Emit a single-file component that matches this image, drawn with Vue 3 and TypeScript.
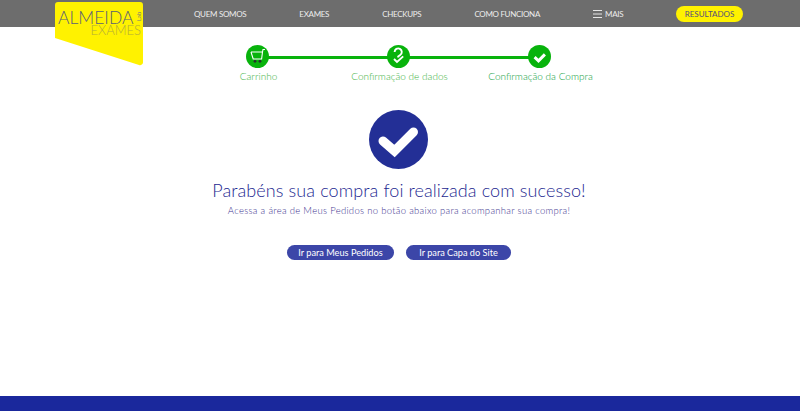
<template>
  <div class="page">
    <header class="topbar">
      <div class="logo">
        <svg viewBox="0 0 88 66" width="88" height="66">
          <path d="M3 2H85a3 3 0 0 1 3 3V62a3 3 0 0 1-4 3L0 38V5a3 3 0 0 1 3-3Z" fill="#fff200" />
        </svg>
        <span class="logo-name">ALMEIDA</span>
        <span class="logo-sub">EXAMES</span>
        <span class="logo-lab">Lab</span>
      </div>
      <nav class="nav">
        <a v-for="item in menu" :key="item" class="nav-link">{{ item }}</a>
        <a class="nav-link nav-more">
          <svg viewBox="0 0 9 8" width="9" height="8" fill="none" stroke="#e6e6e6" stroke-width="1">
            <path d="M0 .5H9M0 4H9M0 7.5H9" />
          </svg>
          MAIS
        </a>
      </nav>
      <button class="results">RESULTADOS</button>
    </header>

    <main class="content">
      <div class="steps">
        <div class="steps-line" />
        <div v-for="step in steps" :key="step.label" class="step" :class="{ current: step.current }">
          <span class="step-dot">
            <svg v-if="step.icon === 'cart'" viewBox="0 0 23 23" width="23" height="23" fill="none" stroke="#fff" stroke-width="1.1">
              <path d="M5 7H16.5L15.6 14H7.2L5 7M16.5 7L17 4.5H19" />
              <circle cx="9" cy="16.3" r="1.4" fill="#26302a" stroke="none" />
              <circle cx="14" cy="16.3" r="1.4" fill="#26302a" stroke="none" />
            </svg>
            <svg v-else-if="step.icon === 'question'" viewBox="0 0 23 23" width="23" height="23" fill="none" stroke="#fff" stroke-width="1.9">
              <path d="M7.6 7a3.6 3.6 0 1 1 5.6 3L11.2 11.4V12.6" />
              <path d="M7 14l3 3 6.2-5.6" />
            </svg>
            <svg v-else viewBox="0 0 23 23" width="23" height="23" fill="none" stroke="#fff" stroke-width="3">
              <path d="M6.6 12.2l3.9 3.6 6.4-6.4" />
            </svg>
          </span>
          <span class="step-label">{{ step.label }}</span>
        </div>
      </div>

      <div class="done-mark">
        <svg viewBox="0 0 59 59" width="59" height="59">
          <circle cx="29.5" cy="29.5" r="29.5" fill="#232f96" />
          <path d="M14 31l11.5 10L44.5 22" fill="none" stroke="#fff" stroke-width="9" stroke-linecap="round" />
        </svg>
      </div>
      <h1 class="title">Parabéns sua compra foi realizada com sucesso!</h1>
      <p class="subtitle">Acessa a área de Meus Pedidos no botão abaixo para acompanhar sua compra!</p>
      <div class="actions">
        <button class="action action--orders">Ir para Meus Pedidos</button>
        <button class="action action--home">Ir para Capa do Site</button>
      </div>
    </main>

    <footer class="footer" />
  </div>
</template>

<script setup lang="ts">
interface Step {
  label: string
  icon: 'cart' | 'question' | 'check'
  current?: boolean
}

const menu = ['QUEM SOMOS', 'EXAMES', 'CHECKUPS', 'COMO FUNCIONA']

const steps: Step[] = [
  { label: 'Carrinho', icon: 'cart' },
  { label: 'Confirmação de dados', icon: 'question' },
  { label: 'Confirmação da Compra', icon: 'check', current: true },
]
</script>

<style>
body {
  margin: 0;
  background: #fff;
}
</style>

<style scoped>
.page {
  width: 800px;
  height: 411px;
  display: flex;
  flex-direction: column;
  overflow: hidden;
  font-family: Lato, "Open Sans", sans-serif;
  position: relative;
}

.topbar {
  height: 27px;
  flex: none;
  box-sizing: border-box;
  background: #6d6d6d;
  display: flex;
  align-items: center;
  padding: 0 57px 0 194px;
}

.logo {
  position: absolute;
  left: 55px;
  top: 0;
  width: 88px;
  height: 66px;
}

.logo svg {
  display: block;
}

.logo-name {
  position: absolute;
  left: 3px;
  top: 11px;
  font-size: 17.5px;
  font-weight: 300;
  line-height: 13px;
  color: #5a5f78;
  white-space: nowrap;
}

.logo-sub {
  position: absolute;
  right: 2px;
  top: 25px;
  font-size: 13px;
  font-weight: 300;
  line-height: 11px;
  color: #b3ad3a;
}

.logo-lab {
  position: absolute;
  right: 1px;
  top: 15px;
  width: 6px;
  height: 6px;
  font-size: 6px;
  line-height: 6px;
  color: #777;
  text-align: center;
  transform: rotate(-90deg);
}

.nav {
  display: flex;
  align-items: center;
  gap: 53px;
}

.nav-link {
  font-size: 8px;
  letter-spacing: -0.3px;
  color: #ececec;
  white-space: nowrap;
}

.nav-more {
  display: flex;
  align-items: center;
  gap: 3px;
}

.results {
  margin-left: auto;
  width: 67px;
  height: 16px;
  padding: 0;
  border: none;
  border-radius: 8px;
  background: #fff200;
  color: #55507a;
  font-family: inherit;
  font-size: 8px;
  font-weight: 400;
}

.content {
  flex: 1;
  display: flex;
  flex-direction: column;
  align-items: center;
  padding-top: 18px;
}

.steps {
  position: relative;
  display: grid;
  grid-template-columns: repeat(3, 141px);
  margin-left: -4px;
}

.steps-line {
  position: absolute;
  left: 70px;
  right: 70px;
  top: 11px;
  height: 3px;
  background: #08b30c;
}

.step {
  position: relative;
  display: flex;
  flex-direction: column;
  align-items: center;
  gap: 1px;
}

.step-dot {
  width: 23px;
  height: 23px;
  border-radius: 50%;
  background: #08b30c;
  display: flex;
  align-items: center;
  justify-content: center;
}

.step-label {
  margin-left: 3px;
  font-size: 10px;
  line-height: 14px;
  font-weight: 300;
  color: #3fb346;
  white-space: nowrap;
}

.step.current .step-label {
  color: #0fa040;
  font-weight: 300;
}

.done-mark {
  margin-top: 27px;
  margin-left: -4px;
  height: 59px;
}

.title {
  margin: 9px 0 0 -2px;
  font-size: 18px;
  line-height: 24px;
  font-weight: 300;
  color: #1c2790;
  letter-spacing: 0.1px;
}

.subtitle {
  margin: 2px 0 0 -2px;
  font-size: 9.5px;
  line-height: 13px;
  font-weight: 300;
  color: #40358f;
  letter-spacing: 0.3px;
}

.actions {
  display: flex;
  gap: 12px;
  margin-top: 28px;
  margin-left: -2px;
}

.action {
  height: 15px;
  padding: 0;
  border: none;
  border-radius: 8px;
  background: #3c46a8;
  color: #fff;
  font-family: inherit;
  font-size: 9.2px;
}

.action--orders {
  width: 107px;
}

.action--home {
  width: 105px;
}

.footer {
  height: 15px;
  flex: none;
  background: #1a289c;
}
</style>
